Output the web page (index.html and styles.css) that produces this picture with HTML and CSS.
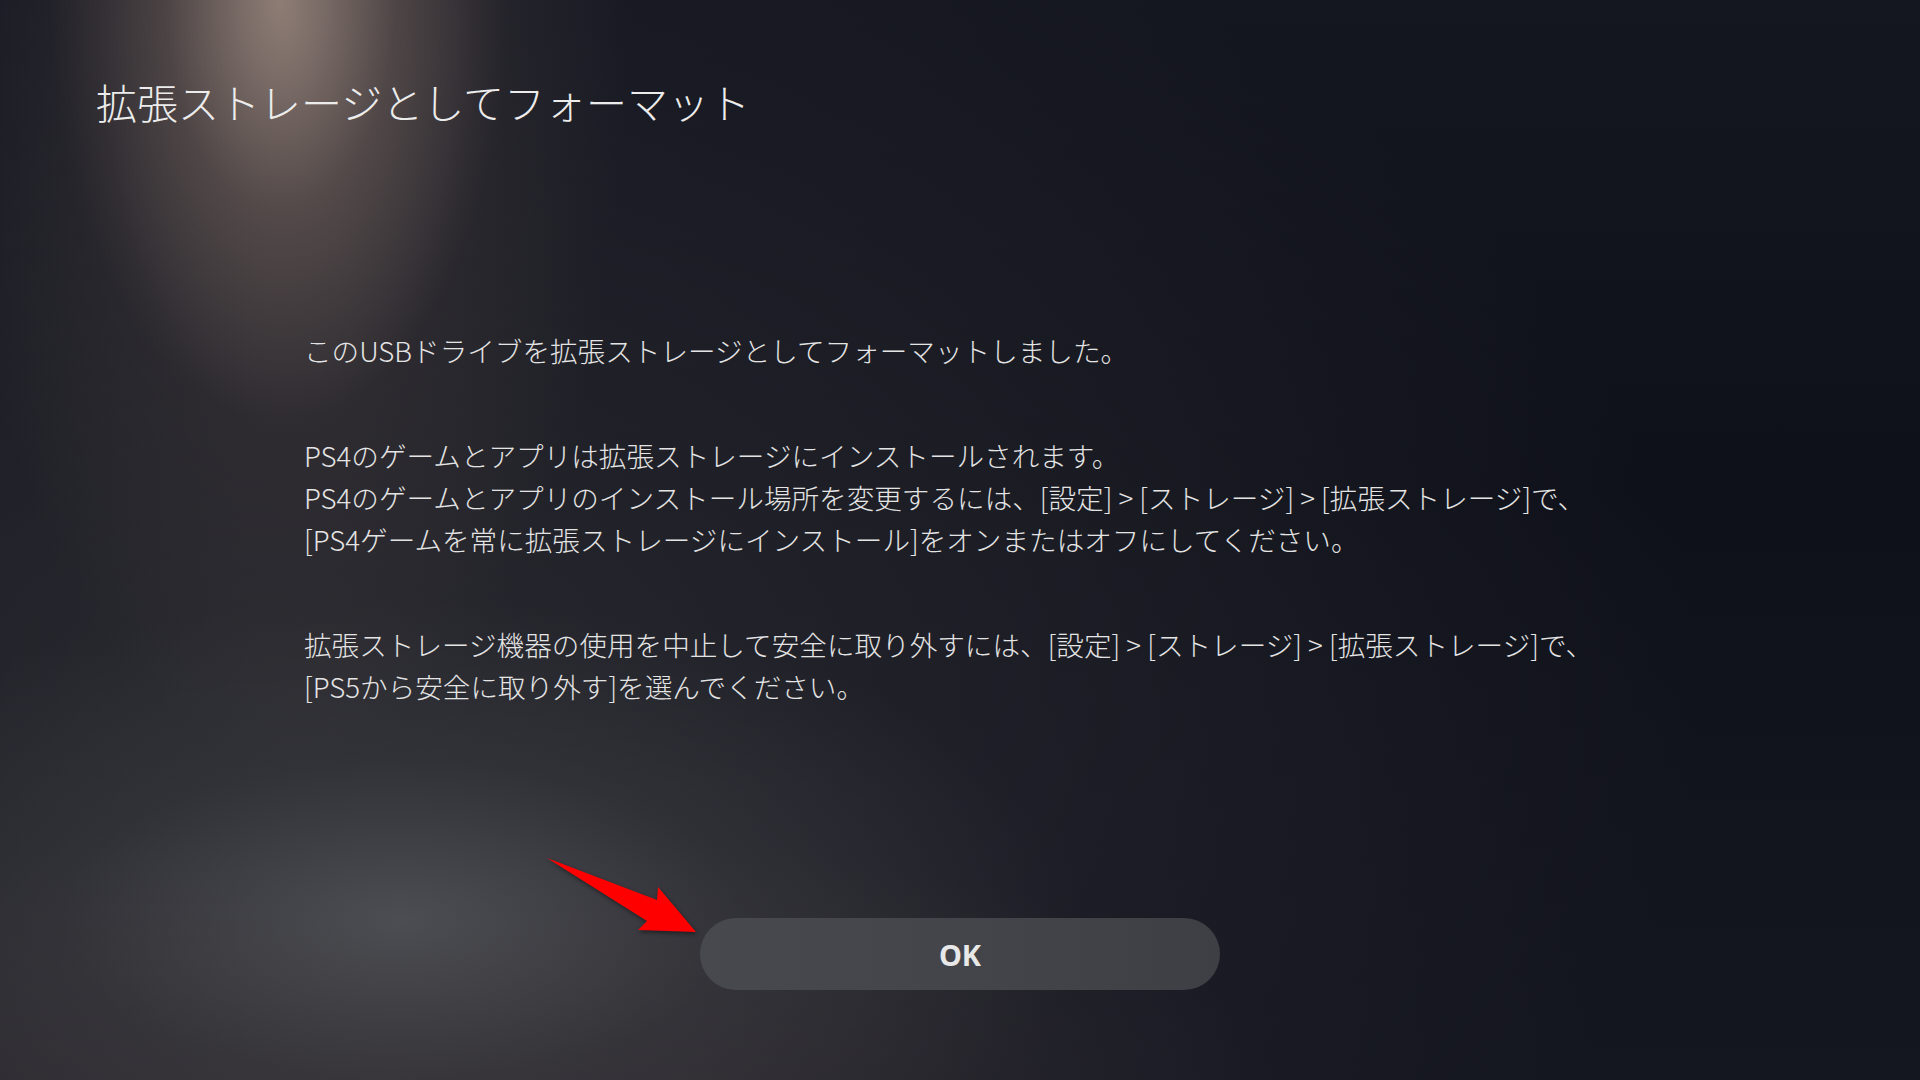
FILE: index.html
```html
<!DOCTYPE html>
<html lang="ja">
  <head>
    <title>拡張ストレージとしてフォーマット</title>
    <meta charset="utf-8">
    <link rel="stylesheet" href="styles.css">
  </head>
  <body>
    <main class="screen">
      <h1 class="title">拡張ストレージとしてフォーマット</h1>

      <section class="message">
        <p>このUSBドライブを拡張ストレージとしてフォーマットしました。</p>
        <p>PS4のゲームとアプリは拡張ストレージにインストールされます。<br>PS4のゲームとアプリのインストール場所を変更するには、[設定] &gt; [ストレージ] &gt; [拡張ストレージ]で、<br>[PS4ゲームを常に拡張ストレージにインストール]をオンまたはオフにしてください。</p>
        <p>拡張ストレージ機器の使用を中止して安全に取り外すには、[設定] &gt; [ストレージ] &gt; [拡張ストレージ]で、<br>[PS5から安全に取り外す]を選んでください。</p>
      </section>

      <div class="actions">
        <button class="ok">OK</button>
      </div>

      <!-- annotation arrow pointing at the OK button -->
      <svg class="arrow" width="200" height="100" viewBox="530 850 200 100">
        <polygon points="547,858 657,900 658,887 696,932 638,930 647,921" />
      </svg>
    </main>
  </body>
</html>
```

FILE: styles.css
```css
html, body {
  margin: 0;
  height: 100%;
  background-color: #11131b;
}
.screen {
  position: relative;
  width: 1920px;
  height: 1080px;
  box-sizing: border-box;
  padding: 77px 0 0 0;
  display: flex;
  flex-direction: column;
  overflow: hidden;
  font-family: "Noto Sans CJK JP", "Noto Sans", sans-serif;
  color: #e4e4e4;
  background:
    radial-gradient(ellipse 230px 420px at 280px 0px, rgba(170, 150, 138, 0.7), rgba(130, 112, 104, 0.3) 50%, rgba(80, 70, 70, 0) 100%),
    radial-gradient(ellipse 340px 720px at 290px 40px, rgba(112, 96, 92, 0.6), rgba(80, 70, 70, 0.25) 55%, rgba(60, 54, 56, 0) 100%),
    radial-gradient(ellipse 680px 320px at 400px 920px, rgba(78, 79, 84, 0.95), rgba(56, 57, 62, 0.6) 50%, rgba(40, 40, 46, 0) 100%),
    radial-gradient(ellipse 900px 260px at 380px 1080px, rgba(66, 56, 60, 0.7), rgba(50, 44, 48, 0) 100%),
    radial-gradient(ellipse 1400px 900px at 300px 700px, rgba(44, 44, 50, 0.9), rgba(30, 30, 36, 0) 100%),
    linear-gradient(180deg, #141620 0%, #0f111a 45%, #141620 100%);
}
.title {
  margin: 0 0 0 96px;
  font-size: 41px;
  font-weight: 300;
  line-height: 49px;
  color: #ececec;
}
.message {
  margin: 203px 0 0 304px;
  font-size: 27.6px;
  font-weight: 300;
  line-height: 42px;
}
.message p {
  margin: 0 0 63px 0;
  white-space: nowrap;
}
.message p:last-child {
  margin-bottom: 0;
}
.actions {
  margin-top: 211px;
  display: flex;
  justify-content: center;
}
.ok {
  width: 520px;
  height: 72px;
  border: none;
  border-radius: 36px;
  background: linear-gradient(90deg, #48494e 0%, #43444a 60%, #3e3f45 100%);
  color: #e8e8e8;
  font-family: "Noto Sans", sans-serif;
  font-size: 29px;
  font-weight: 700;
  padding: 0;
}
.arrow {
  position: absolute;
  left: 530px;
  top: 850px;
  overflow: visible;
}
.arrow polygon {
  fill: #ff0000;
  filter: drop-shadow(1px 2px 2px rgba(0, 0, 0, 0.45));
}
```
